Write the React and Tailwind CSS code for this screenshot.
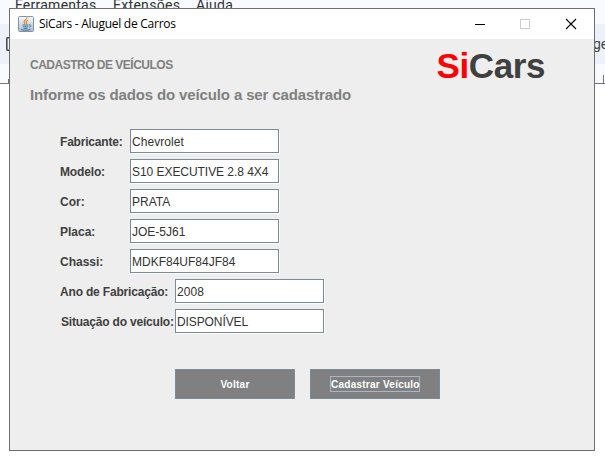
import React from "react";

const shortFields = [
  { label: "Fabricante:", value: "Chevrolet", labelTrack: "tracking-[-0.2px]", track: "tracking-[0.05px]" },
  { label: "Modelo:", value: "S10 EXECUTIVE 2.8 4X4", labelTrack: "tracking-[-0.15px]", track: "tracking-[-0.05px]" },
  { label: "Cor:", value: "PRATA", labelTrack: "tracking-[0px]", track: "tracking-[0px]" },
  { label: "Placa:", value: "JOE-5J61", labelTrack: "tracking-[0px]", track: "tracking-[0px]" },
  { label: "Chassi:", value: "MDKF84UF84JF84", labelTrack: "tracking-[0px]", track: "tracking-[0px]" },
];

const longFields = [
  { label: "Ano de Fabricação:", value: "2008", labelTrack: "tracking-[-0.18px]", track: "tracking-[0.1px]" },
  { label: "Situação do veículo:", value: "DISPONÍVEL", labelTrack: "tracking-[-0.2px] pl-px", track: "tracking-[-0.1px]" },
];

function Field({ field, labelWidth }) {
  return (
    <div className="flex h-[25px]">
      <label className={`${labelWidth} ${field.labelTrack} shrink-0 whitespace-nowrap text-[12px] font-bold leading-[27px] text-[#404040]`}>
        {field.label}
      </label>
      <div className={`${field.track} h-6 w-[149px] whitespace-nowrap border border-[#7a8a99] bg-white pl-px text-[12px] leading-[25px] text-[#333] shadow-[1px_1px_0_#fff]`}>
        {field.value}
      </div>
    </div>
  );
}

function JavaIcon() {
  return (
    <svg width="16" height="16" viewBox="0 0 16 16">
      <defs>
        <linearGradient id="cupTile" x1="0" y1="0" x2="0" y2="1">
          <stop offset="0" stopColor="#f7f8fa" />
          <stop offset="1" stopColor="#a9bccb" />
        </linearGradient>
      </defs>
      <rect x="0.5" y="0.5" width="15" height="15" rx="1" fill="url(#cupTile)" stroke="#8195a6" />
      <path d="M8.800 1.500C9.500 3.600 5.600 4 6 6c.2.9.8 1.400 1.200 2M10 4.200C8 5 7.600 5.700 8.400 6.600c.4.500.2 1-.2 1.500" fill="none" stroke="#e8812c" strokeWidth="1.100" />
      <path d="M4.500 9h6M5 10.800h5M5.500 12.400h4M3 13.500c2 1.100 7.500 1 9.500-.2M11 9c2.400-.8 2.500 1.500.2 2.300" fill="none" stroke="#416e92" strokeWidth="0.900" />
    </svg>
  );
}

export default function App() {
  return (
    <div className="relative h-[462px] w-[605px] overflow-hidden bg-white font-['Liberation_Sans',Arial,sans-serif]">
      <div className="h-[84px] border-b border-[#747474] bg-[#f8fafd]">
        <div className="flex h-6 font-[Roboto,sans-serif] text-[14px] leading-4 text-[#303236]">
          <span className="-mt-[3px] ml-[15px] w-[98px] tracking-[0.25px]">Ferramentas</span>
          <span className="-mt-[3px] w-[83px] tracking-[0.3px]">Extensões</span>
          <span className="-mt-[3px] tracking-[0.3px]">Ajuda</span>
        </div>
        <div className="flex h-10 items-center justify-between bg-[#edf2fa]">
          <svg width="10" height="14" viewBox="0 0 10 14" className="ml-1.5">
            <path d="M10 .8H1.500Q.8.800.8 1.500v11q0 .7.7.7H10" fill="none" stroke="#444746" strokeWidth="1.500" />
          </svg>
          <span className="w-[12px] whitespace-nowrap font-[Roboto,sans-serif] text-[14px] text-[#444746]">ge</span>
        </div>
        <div className="flex h-[19px] items-end justify-between pl-2 pr-px">
          <i className="h-1 w-px bg-[#747474]" />
          <i className="h-2 w-px bg-[#747474]" />
        </div>
      </div>

      <main className="absolute left-[9px] top-2 h-[443px] w-[586px] border border-[#6e6e6e] bg-[#eee]">
        <header className="flex h-[30px] items-center bg-white pl-2">
          <JavaIcon />
          <h1 className="ml-[5px] whitespace-nowrap font-['Open_Sans',sans-serif] text-[12px] tracking-[-0.26px] text-black">SiCars - Aluguel de Carros</h1>
          <svg width="103" height="12" viewBox="0 0 103 12" className="ml-auto mr-[17px]" shapeRendering="crispEdges">
            <path d="M1 6.500h10" stroke="#000" fill="none" />
            <path d="M46.500 1.500h9v9h-9z" stroke="#ccc" fill="none" />
            <path d="M92 1l10 10M102 1L92 11" stroke="#000" fill="none" shapeRendering="auto" strokeWidth="1.100" />
          </svg>
        </header>

        <div className="flex h-[90px] justify-between pl-5 pr-[49px]">
          <div className="whitespace-nowrap font-bold text-[#808080]">
            <h2 className="mt-[18px] text-[12px] leading-4 tracking-[-0.5px]">CADASTRO DE VEÍCULOS</h2>
            <h3 className="mt-[13px] text-[15px] leading-[18px] tracking-[-0.13px]">Informe os dados do veículo a ser cadastrado</h3>
          </div>
          <div className="mt-[7px] h-10 whitespace-nowrap text-[35px] font-bold leading-10 tracking-[-0.4px] text-[#404040]">
            <span className="text-[#f00]">Si</span>Cars
          </div>
        </div>

        <form className="flex flex-col gap-[5px] pl-[50px]">
          {shortFields.map((field) => (
            <Field key={field.label} field={field} labelWidth="w-[70px]" />
          ))}
          {longFields.map((field) => (
            <Field key={field.label} field={field} labelWidth="w-[115px]" />
          ))}
          <div className="ml-[115px] mt-[30px] flex gap-[15px] text-[10px] font-bold tracking-[0.25px] text-white">
            <button type="button" className="h-[30px] w-[120px] border border-[#7a8a99] bg-[#808080]">Voltar</button>
            <button type="button" className="flex h-[30px] w-[130px] items-center justify-center border border-[#7a8a99] bg-[#808080]">
              <span className="h-4 w-[90px] whitespace-nowrap border border-[#a3b8cc] text-center leading-[15px]">Cadastrar Veículo</span>
            </button>
          </div>
        </form>
      </main>
    </div>
  );
}
